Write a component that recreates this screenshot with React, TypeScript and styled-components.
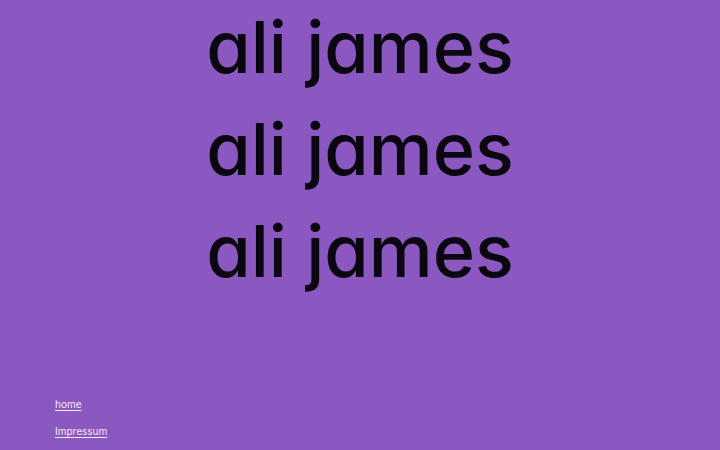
import React from "react";
import styled, { createGlobalStyle } from "styled-components";

const Global = createGlobalStyle`
  html, body { margin: 0; padding: 0; background: #8b57c0; }
  body { width: 720px; height: 450px; overflow: hidden; }
`;

const Page = styled.div`
  width: 720px;
  height: 450px;
  background: #8b57c0;
  display: flex;
  flex-direction: column;
  justify-content: space-between;
  box-sizing: border-box;
`;

const Names = styled.div`
  display: flex;
  flex-direction: column;
  align-items: center;
  margin-top: -4px;
`;

const Name = styled.h1`
  margin: 0;
  font-family: Inter, "Liberation Sans", sans-serif;
  font-feature-settings: "cv11" 1;
  font-weight: 500;
  font-size: 72px;
  line-height: 102px;
  letter-spacing: 0px;
  color: #0b0710;
  white-space: nowrap;
`;

const Footer = styled.nav`
  display: flex;
  flex-direction: column;
  gap: 13px;
  padding: 0 0 12px 55px;
`;

const FootLink = styled.a`
  font-family: Inter, "Liberation Sans", sans-serif;
  font-size: 10px;
  line-height: 14px;
  color: #f2ecf8;
  text-decoration: underline;
  text-underline-offset: 2px;
  width: fit-content;
`;

export default function App() {
  return (
    <>
      <Global />
      <Page>
        <Names>
          <Name>ali james</Name>
          <Name>ali james</Name>
          <Name>ali james</Name>
        </Names>
        <Footer>
          <FootLink href="#">home</FootLink>
          <FootLink href="#">Impressum</FootLink>
        </Footer>
      </Page>
    </>
  );
}
